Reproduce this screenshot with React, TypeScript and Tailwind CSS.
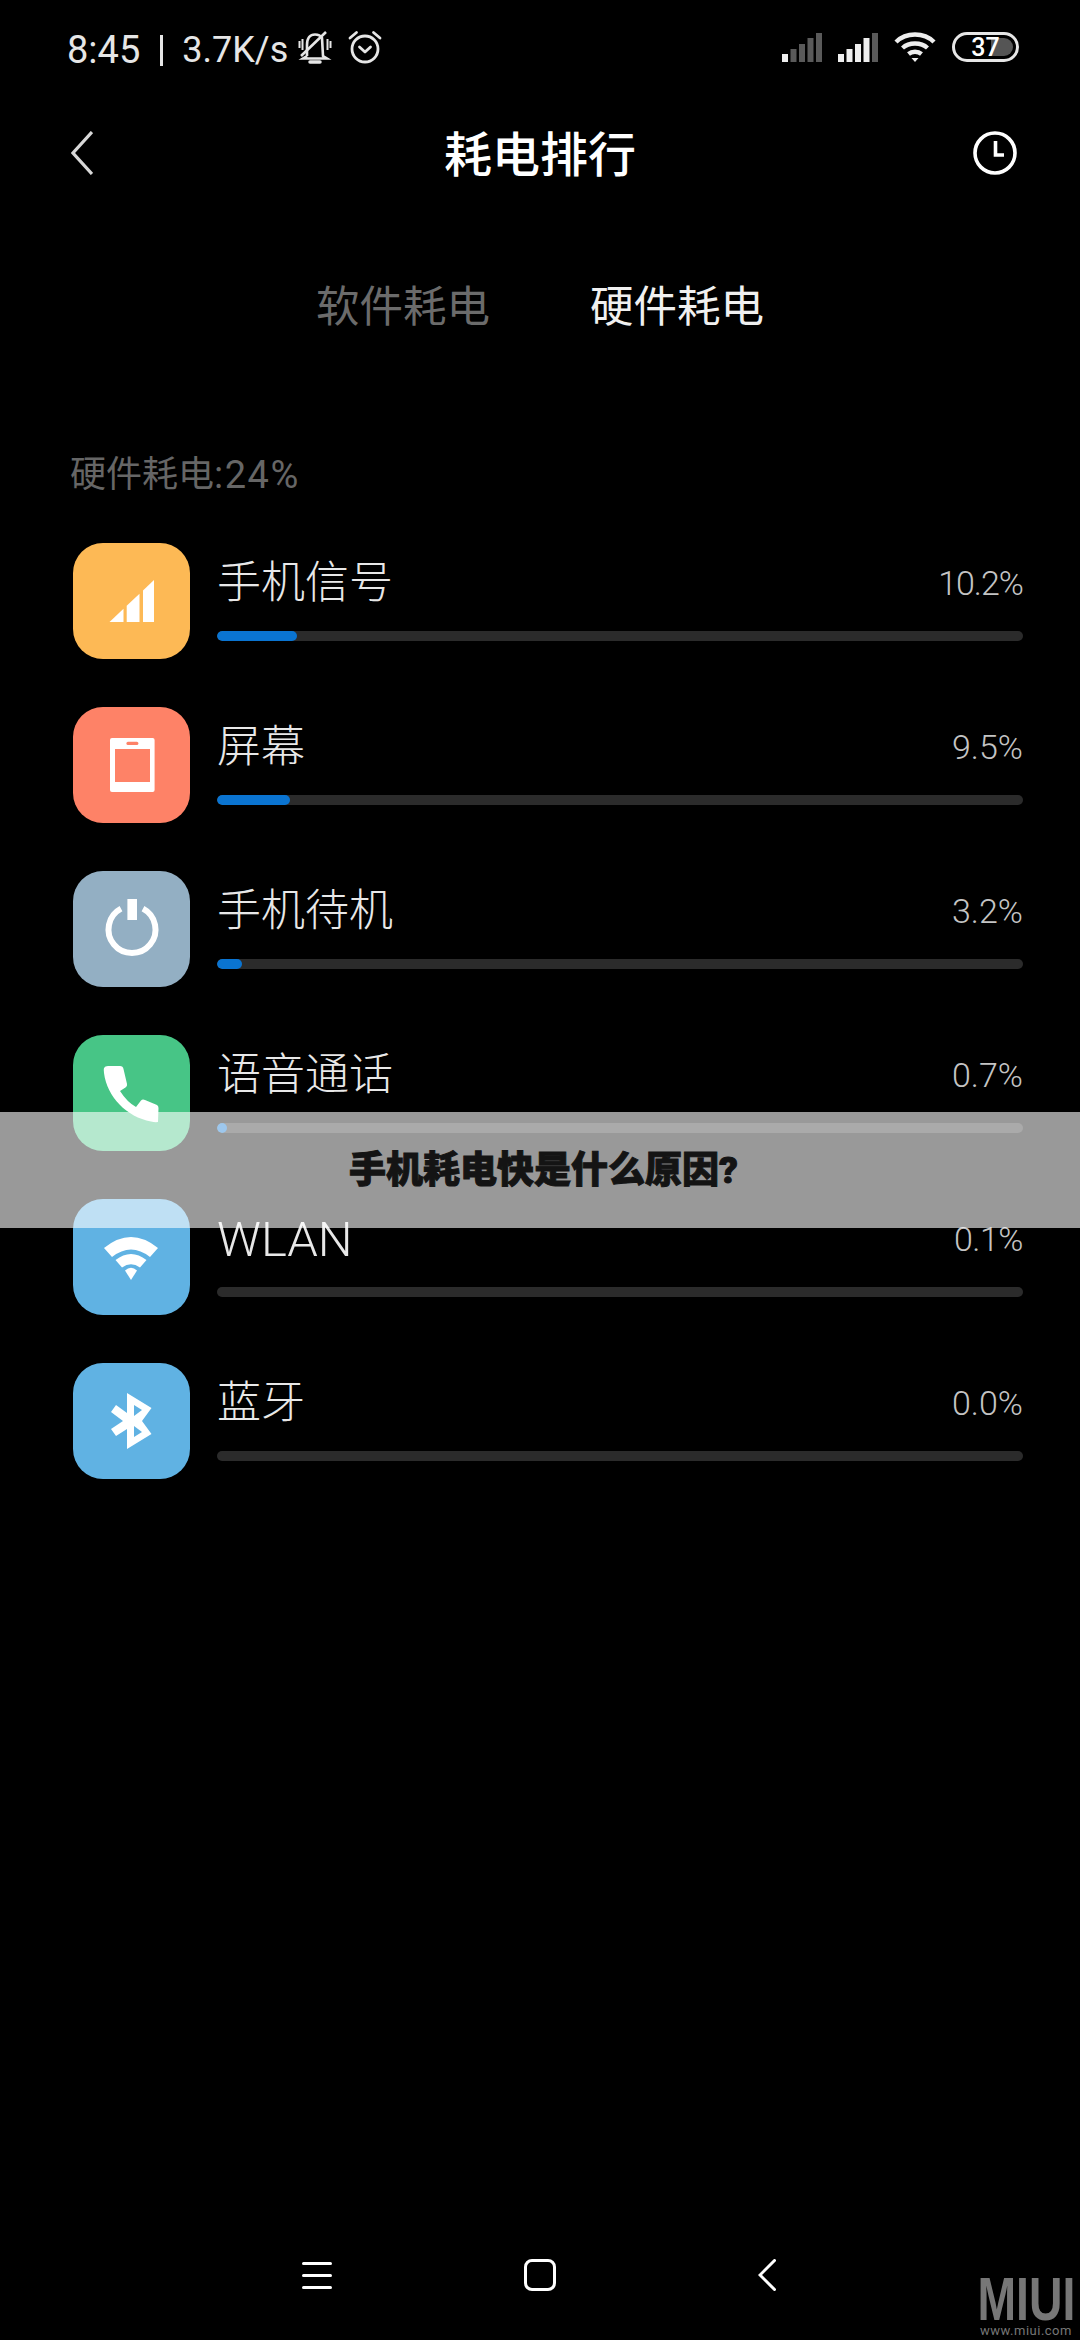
import type { ReactNode } from 'react';

function Signal({ lit }: { lit: number }) {
  const bars = [
    { x: 0, h: 8 },
    { x: 8.5, h: 13 },
    { x: 17, h: 18 },
    { x: 25.5, h: 24 },
    { x: 34, h: 29 },
  ];
  return (
    <svg width="40" height="29" viewBox="0 0 40 29">
      {bars.map((b, i) => (
        <rect key={b.x} x={b.x} y={29 - b.h} width="6" height={b.h} fill={i < lit ? '#eeeeee' : '#5a5a5a'} />
      ))}
    </svg>
  );
}

function StatusBar() {
  return (
    <div className="flex h-[98px] items-center pb-[4px] pl-[67px] pr-[61px] text-[38px] leading-none text-[#e6e6e6]">
      <div className="flex items-center pt-[6px]">
        <span>8:45</span>
        <div className="ml-[20px] mr-[19px] h-[31px] w-[3px] bg-[#e6e6e6]" />
        <span className="text-[36px]">3.7K/s</span>
      </div>
      <svg className="ml-[10px]" width="34" height="33" viewBox="0 0 34 33" fill="none" stroke="#e6e6e6" strokeWidth="2.6">
        <path d="M9 25 V14 C9 7 12 3.500 17 3.500 C20 3.500 22.500 4.500 24 7 L25 25 L29 27.500 H5 L9 25" />
        <path d="M12 31 H22" strokeWidth="3.500" strokeLinecap="round" />
        <path d="M3 25 L28 1" />
        <path d="M1.500 10 V17 M4.500 8 V19 M29.500 8 V19 M32.500 10 V17" strokeWidth="2" />
      </svg>
      <svg className="ml-[16px]" width="34" height="34" viewBox="0 0 34 34" fill="none" stroke="#e6e6e6" strokeWidth="2.8">
        <circle cx="17" cy="19" r="13" />
        <path d="M11.500 17 L17 22 L22.500 17" strokeLinecap="round" strokeLinejoin="round" />
        <path d="M2 8 L8.500 2.500 M32 8 L25.500 2.500" strokeLinecap="round" />
      </svg>
      <div className="ml-auto flex items-center gap-4">
        <Signal lit={1} />
        <Signal lit={4} />
        <svg width="42" height="30" viewBox="0 0 42 30" fill="none" stroke="#eeeeee" strokeWidth="4.4">
          <path d="M2 10 C12 0 30 0 40 10" />
          <path d="M8.500 16 C15 10 27 10 33.500 16" />
          <path d="M14.500 22 C18 19 24 19 27.500 22" />
          <path d="M17.500 26 L21 30 L24.500 26 Z" fill="#eeeeee" stroke="none" />
        </svg>
        <div className="relative flex h-[30px] w-[67px] items-center justify-center overflow-hidden rounded-full border-[3px] border-[#e6e6e6]">
          <div className="absolute bottom-[3px] right-[3px] top-[3px] w-[22px] rounded-r-full bg-[#555555]" />
          <span className="relative text-[25px] font-medium leading-none text-white">37</span>
        </div>
      </div>
    </div>
  );
}

function Header() {
  return (
    <div className="grid h-[110px] grid-cols-[1fr_auto_1fr] items-center px-[63px]">
      <svg className="ml-[8px]" width="22" height="44" viewBox="0 0 22 44" fill="none" stroke="#d8d8d8" strokeWidth="3.2">
        <path d="M21 1 L2 22 L21 43" />
      </svg>
      <span className="pt-[6px] text-[48px] font-medium leading-none text-white">耗电排行</span>
      <svg className="justify-self-end" width="44" height="44" viewBox="0 0 44 44" fill="none" stroke="#ffffff">
        <circle cx="22" cy="22" r="20" strokeWidth="3.6" />
        <path d="M22.500 10 V24 H31" strokeWidth="3.6" />
      </svg>
    </div>
  );
}

interface IconBoxProps {
  color: string;
  children: ReactNode;
}

function IconBox({ color, children }: IconBoxProps) {
  return (
    <div className={`h-[116px] w-[117px] shrink-0 rounded-[30px] ${color}`}>
      <svg width="117" height="116" viewBox="0 0 117 116" fill="#ffffff">
        {children}
      </svg>
    </div>
  );
}

const rows = [
  {
    name: '手机信号',
    size: 'text-[44px]',
    value: '10.2%',
    valueClass: 'tracking-[-1px]',
    color: 'bg-[#fdb955]',
    fill: 'w-[80px]',
    icon: (
      <>
        <path d="M36.500 79 L50.500 65.800 V79 Z" />
        <path d="M53.700 62.800 L66.500 50.700 V79 H53.700 Z" />
        <path d="M70 47.400 L81 37 V79 H70 Z" />
      </>
    ),
  },
  {
    name: '屏幕',
    size: 'text-[44px]',
    value: '9.5%',
    valueClass: '',
    color: 'bg-[#fe8267]',
    fill: 'w-[73px]',
    icon: (
      <>
        <rect x="37" y="31" width="44.600" height="54" rx="2" />
        <rect x="42" y="42" width="35" height="33" fill="#fe8267" />
        <rect x="53.400" y="34.700" width="12" height="3.300" rx="1.600" fill="#fe8267" />
      </>
    ),
  },
  {
    name: '手机待机',
    size: 'text-[44px]',
    value: '3.2%',
    valueClass: '',
    color: 'bg-[#93afc3]',
    fill: 'w-[25px]',
    icon: (
      <>
        <path d="M48 37.700 A23.500 23.500 0 1 0 70 37.700" fill="none" stroke="#ffffff" strokeWidth="6" />
        <rect x="54.400" y="28" width="9.600" height="21" />
      </>
    ),
  },
  {
    name: '语音通话',
    size: 'text-[44px]',
    value: '0.7%',
    valueClass: '',
    color: 'bg-[#47c586]',
    fill: 'w-[10px]',
    icon: (
      <path d="M35 31 L47 31 Q50 31 50.500 34 L54 49 Q54.500 51 52.500 52.500 L47 56 Q54 67 63 72 L68 65.500 Q69.500 64 72 65 L84 70 Q85.500 71 85.500 73 L85 87 Q82 87.500 78 86.500 C54 82 34 62 31 38 Q30.500 34 31 33 Q32 31 35 31 Z" />
    ),
  },
  {
    name: 'WLAN',
    size: 'text-[49px]',
    value: '0.1%',
    valueClass: 'tracking-[-0.5px]',
    color: 'bg-[#60b2e3]',
    fill: 'w-0',
    icon: (
      <>
        <path d="M31 49 Q58 27 85 49 L77 58 Q58 43 39 58 Z" />
        <path d="M42.500 61 Q58 49 73.500 61 L67 68.500 Q58 62 49 68.500 Z" />
        <path d="M52 71.500 Q58 66 64 71.500 L58 81 Z" />
      </>
    ),
  },
  {
    name: '蓝牙',
    size: 'text-[44px]',
    value: '0.0%',
    valueClass: '',
    color: 'bg-[#60b2e3]',
    fill: 'w-0',
    icon: (
      <path
        fillRule="evenodd"
        d="M54 30 L78.500 45 L69 58 L78.500 71 L54 86 V66 L43 73 L38 66 L50 58 L38 49 L43 42 L54 50 Z M61 42 V53 L69 47 Z M61 63 V74 L69 69 Z"
      />
    ),
  },
];

interface UsageRowProps {
  name: string;
  size: string;
  value: string;
  valueClass: string;
  color: string;
  fill: string;
  icon: ReactNode;
}

function UsageRow({ name, size, value, valueClass, color, fill, icon }: UsageRowProps) {
  return (
    <div className="flex gap-[27px]">
      <IconBox color={color}>{icon}</IconBox>
      <div className="flex-1 pt-[17px]">
        <div className="flex h-[46px] items-center justify-between">
          <span className={`font-light leading-none text-[#e8e8e8] ${size}`}>{name}</span>
          <span className={`text-[34px] font-light leading-none text-[#c4c4c4] ${valueClass}`}>{value}</span>
        </div>
        <div className="mt-[25px] h-[10px] overflow-hidden rounded-full bg-[#2b2b2b]">
          <div className={`h-full rounded-full bg-[#0a74d1] ${fill}`} />
        </div>
      </div>
    </div>
  );
}

function NavBar() {
  return (
    <div className="mt-auto flex h-[130px] items-center pl-[302px]">
      <div className="flex w-[30px] flex-col gap-[9px]">
        <div className="h-[3px] rounded-full bg-white" />
        <div className="h-[3px] rounded-full bg-white" />
        <div className="h-[3px] rounded-full bg-white" />
      </div>
      <div className="ml-[192px] h-[32px] w-[32px] rounded-[8px] border-[3px] border-white" />
      <svg className="ml-[202px]" width="18" height="32" viewBox="0 0 18 32" fill="none" stroke="#ffffff" strokeWidth="3" strokeLinecap="round">
        <path d="M16.500 1.500 L2 16 L16.500 30.500" />
      </svg>
    </div>
  );
}

export default function App() {
  return (
    <div className="relative flex h-[2340px] w-[1080px] flex-col overflow-hidden bg-black font-['Roboto','Noto_Sans_CJK_SC',sans-serif]">
      <StatusBar />
      <Header />
      <div className="mt-[70px] flex h-[60px] items-center gap-[100px] pl-[316px] text-[43.5px] leading-none">
        <span className="text-[#6b6b6b]">软件耗电</span>
        <span className="text-[#f0f0f0]">硬件耗电</span>
      </div>
      <div className="mt-[117px] flex h-[40px] items-center pl-[70px] text-[36px] leading-none text-[#666666]">
        硬件耗电<span className="text-[38px] tracking-[1.5px]">:24%</span>
      </div>
      <div className="mt-[48px] flex flex-col gap-[48px] pl-[73px] pr-[57px]">
        {rows.map((row) => (
          <UsageRow key={row.name} {...row} />
        ))}
      </div>
      <NavBar />

      <div className="absolute left-0 right-0 top-[1112px] flex h-[116px] items-center bg-white/60 pl-[349px] text-[37px] font-black leading-none text-[#141414] [-webkit-text-stroke:1px_#141414]">
        手机耗电快是什么原因?
      </div>

      <div className="absolute left-[976px] top-[2276px] flex w-[100px] flex-col items-center text-[#777777]">
        <span className="block h-[46px] scale-x-[0.76] font-['Liberation_Sans',sans-serif] text-[61px] font-bold leading-[46px]">MIUI</span>
        <span className="mt-[2px] block text-[13px] leading-[13px] tracking-[0.5px]">www.miui.com</span>
      </div>
    </div>
  );
}
